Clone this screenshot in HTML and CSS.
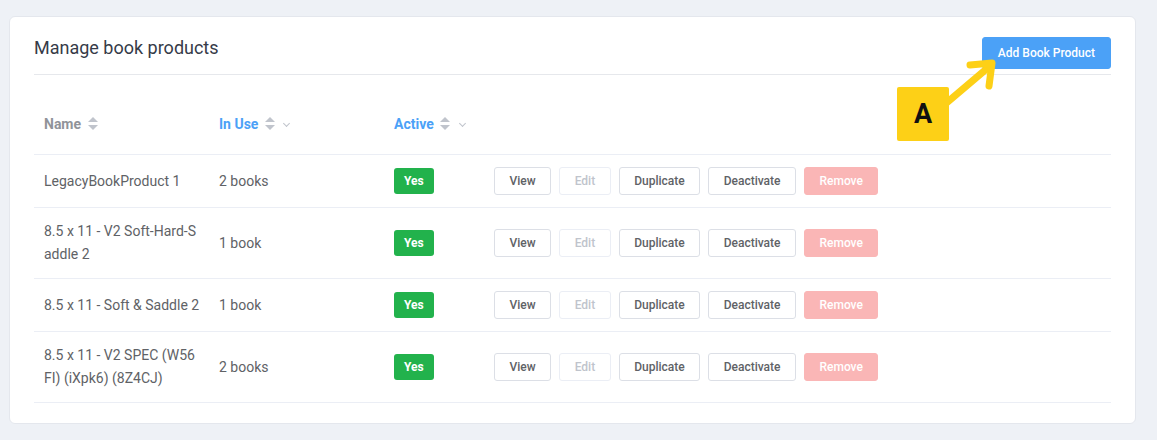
FILE: index.html
```html
<!DOCTYPE html>
<html lang="en">
<head>
<meta charset="utf-8">
<title>Book Products</title>
<link rel="stylesheet" href="styles.css">
</head>
<body>
<article class="card">
  <header class="card-head">
    <h1>Manage book products</h1>
    <button type="button" class="btn btn-primary btn-add">Add Book Product</button>
  </header>

  <div class="callout">
    <svg class="callout-arrow" width="125" height="100" viewBox="0 0 125 100">
      <g fill="none" stroke="#fdd017" stroke-width="7" stroke-linecap="round" stroke-linejoin="round">
        <line x1="62" y1="54" x2="108" y2="15"/>
        <polyline points="88,14 110,12 107,35"/>
      </g>
    </svg>
    <span class="callout-box">A</span>
  </div>

  <table class="tbl">
    <colgroup>
      <col class="c-name"><col class="c-use"><col class="c-active"><col>
    </colgroup>
    <thead>
      <tr>
        <th>Name <i class="sort"></i></th>
        <th class="on">In Use <i class="sort"></i> <i class="chev"></i></th>
        <th class="on">Active <i class="sort"></i> <i class="chev"></i></th>
        <th></th>
      </tr>
    </thead>
    <tbody>
      <tr>
        <td>LegacyBookProduct 1</td>
        <td>2 books</td>
        <td><span class="tag">Yes</span></td>
        <td>
          <div class="acts">
            <button type="button" class="btn">View</button>
            <button type="button" class="btn" disabled>Edit</button>
            <button type="button" class="btn">Duplicate</button>
            <button type="button" class="btn">Deactivate</button>
            <button type="button" class="btn btn-danger" disabled>Remove</button>
          </div>
        </td>
      </tr>
      <tr>
        <td>8.5 x 11 - V2 Soft-Hard-Saddle 2</td>
        <td>1 book</td>
        <td><span class="tag">Yes</span></td>
        <td>
          <div class="acts">
            <button type="button" class="btn">View</button>
            <button type="button" class="btn" disabled>Edit</button>
            <button type="button" class="btn">Duplicate</button>
            <button type="button" class="btn">Deactivate</button>
            <button type="button" class="btn btn-danger" disabled>Remove</button>
          </div>
        </td>
      </tr>
      <tr>
        <td>8.5 x 11 - Soft &amp; Saddle 2</td>
        <td>1 book</td>
        <td><span class="tag">Yes</span></td>
        <td>
          <div class="acts">
            <button type="button" class="btn">View</button>
            <button type="button" class="btn" disabled>Edit</button>
            <button type="button" class="btn">Duplicate</button>
            <button type="button" class="btn">Deactivate</button>
            <button type="button" class="btn btn-danger" disabled>Remove</button>
          </div>
        </td>
      </tr>
      <tr>
        <td>8.5 x 11 - V2 SPEC (W56FI) (iXpk6) (8Z4CJ)</td>
        <td>2 books</td>
        <td><span class="tag">Yes</span></td>
        <td>
          <div class="acts">
            <button type="button" class="btn">View</button>
            <button type="button" class="btn" disabled>Edit</button>
            <button type="button" class="btn">Duplicate</button>
            <button type="button" class="btn">Deactivate</button>
            <button type="button" class="btn btn-danger" disabled>Remove</button>
          </div>
        </td>
      </tr>
    </tbody>
  </table>
</article>
</body>
</html>
```

FILE: styles.css
```css
*{margin:0;padding:0;box-sizing:border-box}
body{padding:16px 21px 0 9px;background-color:#eef1f6;font-family:Roboto,"Liberation Sans",sans-serif;font-size:14px;color:#606266}
button{font-family:inherit}

.card{position:relative;padding:0 24px 20px;border:1px solid #e4e7ed;border-radius:6px;background-color:#fff}
.card-head{display:flex;justify-content:space-between;align-items:flex-start;padding:18px 0 5px;border-bottom:1px solid #e6e8ec}
.card-head h1{margin-top:1px;font-size:18px;font-weight:400;line-height:24px;color:#363b48}
.card-head .btn-add{margin-top:2px}

.btn{display:inline-block;padding:7px 14.5px;border:1px solid #dcdfe6;border-radius:3px;background-color:#fff;font-size:12px;font-weight:500;line-height:12px;color:#606266;white-space:nowrap;cursor:pointer}
.btn:disabled{border-color:#ebeef5;color:#c0c4cc;cursor:not-allowed}
.btn-primary{padding:9px 15px;border-color:#4ba1f7;background-color:#4ba1f7;color:#fff}
.btn-danger:disabled{border-color:#fab6b6;background-color:#fab6b6;color:#fff}

.callout{position:absolute;left:872px;top:34px;width:125px;height:100px;pointer-events:none}
.callout-arrow{position:absolute;left:0;top:0}
.callout-box{position:absolute;left:15px;top:36px;width:52px;height:54px;border-radius:2px;background-color:#fdd017;font-size:27px;font-weight:700;line-height:54px;text-align:center;color:#111}

.tbl{width:100%;margin-top:26px;border-collapse:collapse;table-layout:fixed}
.tbl .c-name,.tbl .c-use{width:175px}
.tbl .c-active{width:100px}
.tbl th,.tbl td{padding:12px 10px;border-bottom:1px solid #ebeef5;line-height:23px;text-align:left;vertical-align:middle}
.tbl th{padding-bottom:18px;font-weight:700;color:#909399;white-space:nowrap}
.tbl th.on{color:#4ba1f7}
.tbl td:first-child{padding-right:7px;word-break:break-all}

.sort{display:inline-block;position:relative;width:10px;height:14px;margin-left:3px;vertical-align:-2px}
.sort::before,.sort::after{content:"";position:absolute;left:0;border-left:5px solid transparent;border-right:5px solid transparent}
.sort::before{top:0;border-bottom:5px solid #c0c4cc}
.sort::after{bottom:1px;border-top:5px solid #c0c4cc}
.chev{display:inline-block;width:5px;height:5px;margin-left:6px;border-right:1px solid #c0c4cc;border-bottom:1px solid #c0c4cc;transform:rotate(45deg);vertical-align:3px}

.tag{display:inline-block;padding:0 10px;height:26px;border-radius:3px;background-color:#22b24c;font-size:12px;font-weight:700;line-height:26px;color:#fff}
.acts{display:flex;gap:8px}
```
